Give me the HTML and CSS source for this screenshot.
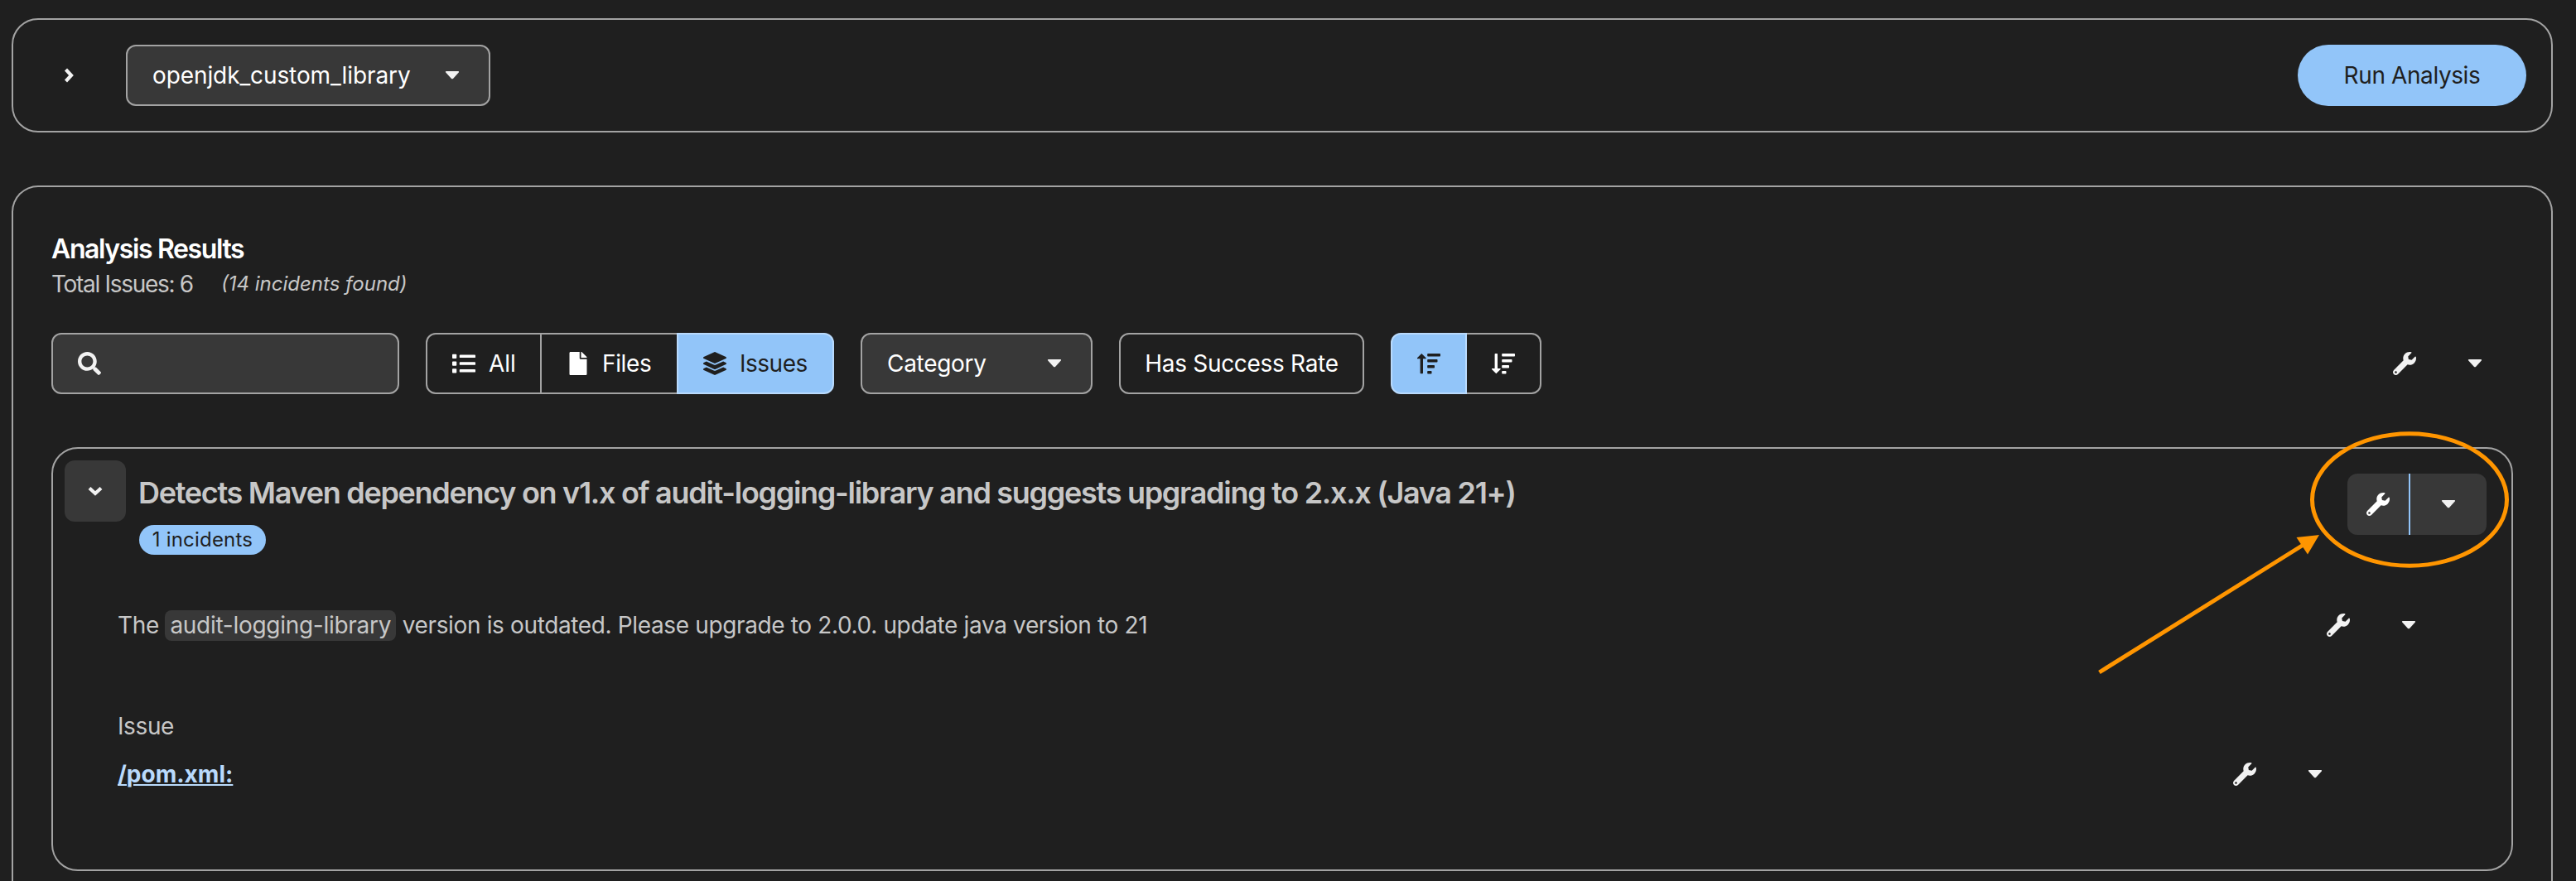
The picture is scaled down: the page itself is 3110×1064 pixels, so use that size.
FILE: index.html
```html
<!DOCTYPE html>
<html lang="en">
<head>
<meta charset="utf-8">
<title>Analysis Results</title>
<link rel="stylesheet" href="styles.css">
</head>
<body>
<svg class="defs" aria-hidden="true">
  <symbol id="wrench" viewBox="0 0 512 512"><path d="M507.73 109.1c-2.24-9.03-13.54-12.09-20.12-5.51l-74.36 74.36-67.88-11.31-11.31-67.88 74.36-74.36c6.62-6.62 3.43-17.9-5.66-20.16-47.38-11.74-99.55.91-136.58 37.93-39.64 39.64-50.55 97.1-34.05 147.2L18.74 402.76c-24.99 24.99-24.99 65.51 0 90.5 24.99 24.99 65.51 24.99 90.5 0l213.21-213.21c50.12 16.71 107.47 5.68 147.37-34.22 37.07-37.07 49.7-89.32 37.91-136.73zM64 472c-13.25 0-24-10.75-24-24 0-13.26 10.75-24 24-24s24 10.74 24 24c0 13.25-10.75 24-24 24z"/></symbol>
  <symbol id="caret" viewBox="0 0 18 12"><path d="M1.8 1h14.4c.9 0 1.2.9.6 1.5L10 9.9c-.6.6-1.4.6-2 0L1.200 2.500C.6 1.900.9 1 1.800 1z"/></symbol>
  <symbol id="angle" viewBox="0 0 14 20"><path d="M3.500 3l6.500 7-6.500 7" fill="none" stroke="currentColor" stroke-width="4.200"/></symbol>
</svg>

<main class="page">
  <section class="card profile">
    <button class="plain" aria-label="Expand"><svg class="angle"><use href="#angle"/></svg></button>
    <button class="select profile-select"><span class="t-profile">openjdk_custom_library</span><svg class="caret"><use href="#caret"/></svg></button>
    <button class="run">Run Analysis</button>
  </section>

  <section class="card results">
    <h2 class="title">Analysis Results</h2>
    <div class="meta"><span class="total">Total Issues: 6</span><em class="found">(14 incidents found)</em></div>

    <div class="toolbar">
      <div class="search">
        <svg class="icon" viewBox="0 0 512 512"><path d="M505 442.7L405.3 343c-4.5-4.5-10.6-7-17-7H372c27.6-35.3 44-79.7 44-128C416 93.1 322.900 0 208 0S0 93.100 0 208s93.100 208 208 208c48.300 0 92.700-16.400 128-44v16.300c0 6.400 2.500 12.500 7 17l99.700 99.700c9.400 9.400 24.600 9.400 33.900 0l28.300-28.300c9.400-9.400 9.400-24.600.1-34zM208 336c-70.700 0-128-57.200-128-128 0-70.700 57.200-128 128-128 70.700 0 128 57.200 128 128 0 70.700-57.200 128-128 128z"/></svg>
      </div>
      <div class="group view-group">
        <button class="seg seg-all"><svg class="icon" viewBox="0 0 512 512"><path d="M80 368H16a16 16 0 0 0-16 16v64a16 16 0 0 0 16 16h64a16 16 0 0 0 16-16v-64a16 16 0 0 0-16-16zm0-320H16A16 16 0 0 0 0 64v64a16 16 0 0 0 16 16h64a16 16 0 0 0 16-16V64a16 16 0 0 0-16-16zm0 160H16a16 16 0 0 0-16 16v64a16 16 0 0 0 16 16h64a16 16 0 0 0 16-16v-64a16 16 0 0 0-16-16zm416 176H176a16 16 0 0 0-16 16v32a16 16 0 0 0 16 16h320a16 16 0 0 0 16-16v-32a16 16 0 0 0-16-16zm0-320H176a16 16 0 0 0-16 16v32a16 16 0 0 0 16 16h320a16 16 0 0 0 16-16V80a16 16 0 0 0-16-16zm0 160H176a16 16 0 0 0-16 16v32a16 16 0 0 0 16 16h320a16 16 0 0 0 16-16v-32a16 16 0 0 0-16-16z"/></svg><span>All</span></button>
        <button class="seg seg-files"><svg class="icon" viewBox="0 0 384 512"><path d="M224 136V0H24C10.700 0 0 10.700 0 24v464c0 13.300 10.700 24 24 24h336c13.300 0 24-10.700 24-24V160H248c-13.200 0-24-10.800-24-24zm160-14.100v6.100H256V0h6.100c6.400 0 12.500 2.500 17 7l97.900 98c4.500 4.500 7 10.600 7 16.900z"/></svg><span>Files</span></button>
        <button class="seg seg-issues selected"><svg class="icon" viewBox="0 0 512 512"><path d="M12.410 148.020l232.940 105.670c6.800 3.090 14.490 3.090 21.290 0l232.940-105.670c16.550-7.510 16.550-32.520 0-40.030L266.650 2.310a25.607 25.607 0 0 0-21.290 0L12.410 107.980c-16.550 7.510-16.550 32.530 0 40.040zm487.180 88.280l-58.090-26.330-161.640 73.270c-7.560 3.430-15.590 5.170-23.860 5.170s-16.290-1.740-23.860-5.170L70.510 209.970l-58.100 26.330c-16.550 7.500-16.550 32.500 0 40l232.940 105.590c6.800 3.080 14.490 3.080 21.290 0L499.590 276.300c16.550-7.500 16.550-32.500 0-40zm0 127.800l-57.870-26.230-161.860 73.370c-7.560 3.430-15.590 5.170-23.860 5.170s-16.290-1.740-23.860-5.170L70.290 337.870 12.410 364.100c-16.550 7.500-16.550 32.500 0 40l232.940 105.590c6.800 3.080 14.490 3.080 21.290 0L499.590 404.100c16.550-7.500 16.550-32.500 0-40z"/></svg><span>Issues</span></button>
      </div>
      <button class="select category"><span class="t-category">Category</span><svg class="caret"><use href="#caret"/></svg></button>
      <button class="outline">Has Success Rate</button>
      <div class="group">
        <button class="seg sort-up selected" aria-label="Sort ascending"><svg class="icon" viewBox="0 0 28 28"><path d="M5.300 2L10.600 7.300c.4.500.2 1-.4 1H7V25.500q0 .8-.8.8H4.400q-.8 0-.8-.8V8.300H.4c-.6 0-.8-.5-.4-1z"/><path d="M13 2h14.200q.8 0 .8.800v1.900q0 .8-.8.800H13q-.8 0-.8-.8V2.800q0-.8.8-.8zM13 9h10.700q.8 0 .8.800v1.900q0 .8-.8.800H13q-.8 0-.8-.8V9.800q0-.8.8-.8zM13 16h7.200q.8 0 .8.800v1.900q0 .8-.8.800H13q-.8 0-.8-.8v-1.900q0-.8.8-.8zM13 23h3.700q.8 0 .8.800v1.900q0 .8-.8.800H13q-.8 0-.8-.8v-1.900q0-.8.800-.8z"/></svg></button>
        <button class="seg sort-down" aria-label="Sort descending"><svg class="icon" viewBox="0 0 28 28"><path d="M5.300 26.300L10.600 21c.4-.5.2-1-.4-1H7V2.800Q7 2 6.200 2H4.400q-.8 0-.8.800V20H.4c-.6 0-.8.500-.4 1z"/><path d="M13 2h14.200q.8 0 .8.800v1.900q0 .8-.8.800H13q-.8 0-.8-.8V2.800q0-.8.8-.8zM13 9h10.700q.8 0 .8.800v1.900q0 .8-.8.800H13q-.8 0-.8-.8V9.800q0-.8.8-.8zM13 16h7.200q.8 0 .8.800v1.900q0 .8-.8.800H13q-.8 0-.8-.8v-1.900q0-.8.8-.8zM13 23h3.700q.8 0 .8.800v1.900q0 .8-.8.800H13q-.8 0-.8-.8v-1.900q0-.8.800-.8z"/></svg></button>
      </div>
      <div class="split toolbar-split"><button class="split-main" aria-label="Fix"><svg class="icon"><use href="#wrench"/></svg></button><button class="split-more" aria-label="More"><svg class="caret"><use href="#caret"/></svg></button></div>
    </div>

    <article class="issue">
      <header class="issue-head">
        <button class="collapse" aria-label="Collapse"><svg class="angle down"><use href="#angle"/></svg></button>
        <div class="issue-title">
          <h3 class="name">Detects Maven dependency on v1.x of audit-logging-library and suggests upgrading to 2.x.x (Java 21+)</h3>
          <span class="badge">1 incidents</span>
        </div>
        <div class="split active"><button class="split-main" aria-label="Fix"><svg class="icon"><use href="#wrench"/></svg></button><button class="split-more" aria-label="More"><svg class="caret"><use href="#caret"/></svg></button></div>
      </header>
      <div class="issue-body">
        <div class="row">
          <p class="message">The <code class="code">audit-logging-library</code> version is outdated. Please upgrade to 2.0.0. update java version to 21</p>
          <div class="split"><button class="split-main" aria-label="Fix"><svg class="icon"><use href="#wrench"/></svg></button><button class="split-more" aria-label="More"><svg class="caret"><use href="#caret"/></svg></button></div>
        </div>
        <div class="label">Issue</div>
        <div class="row file-row">
          <a class="link" href="#">/pom.xml:</a>
          <div class="split"><button class="split-main" aria-label="Fix"><svg class="icon"><use href="#wrench"/></svg></button><button class="split-more" aria-label="More"><svg class="caret"><use href="#caret"/></svg></button></div>
        </div>
      </div>
    </article>
  </section>
</main>

<svg class="callout" viewBox="0 0 520 310" aria-hidden="true">
  <ellipse cx="389" cy="93.500" rx="117.500" ry="79.700"/>
  <path class="line" d="M14.500 302L264 146"/>
  <path class="head" d="M280 136l-27.500 3L266 159.500z"/>
</svg>
</body>
</html>
```
FILE: styles.css
```css
* { box-sizing: border-box; }
body {
  margin: 0;
  height: 1064px;
  position: relative;
  overflow: hidden;
  background: #1f1f1f;
  color: #c7c7c7;
  font: 400 28px/42px Inter, "Open Sans", sans-serif;
}
button {
  margin: 0;
  padding: 0;
  border: 0;
  background: none;
  color: #fff;
  font: inherit;
  display: flex;
  align-items: center;
  white-space: nowrap;
}
h2, h3, p { margin: 0; }
svg { display: block; flex: none; fill: currentColor; }
.defs { display: none; }
.icon { width: 28px; height: 28px; }
.caret { width: 18px; height: 12px; color: #f2f2f2; }
.angle { width: 14px; height: 20px; color: #f2f2f2; }
.down { transform: rotate(90deg); }

.page {
  display: flex;
  flex-direction: column;
  gap: 64px;
  height: 1064px;
  padding: 22px 28px 0 14px;
}
.card { border: 2px solid #a3a3a3; border-radius: 32px; flex: none; }

.profile { display: flex; align-items: center; padding: 30px; height: 138px; }
.plain { width: 74px; height: 74px; justify-content: center; margin-right: 32px; }
.select {
  height: 74px;
  padding: 0 35px 0 30px;
  justify-content: space-between;
  border: 2px solid #a3a3a3;
  border-radius: 12px;
  background: #383838;
}
.profile-select { width: 440px; }
.t-profile { letter-spacing: -0.1px; }
.run {
  width: 276px;
  height: 74px;
  justify-content: center;
  margin-left: auto;
  border-radius: 37px;
  background: #92c5f9;
  color: #1f1f1f;
  letter-spacing: -0.4px;
}

.results {
  height: 840px;
  padding: 54px 46px 0;
  border-bottom: 0;
  border-radius: 32px 32px 0 0;
}
.title { color: #fff; font-size: 32px; font-weight: 600; line-height: 42px; letter-spacing: -1.38px; }
.meta { display: flex; gap: 34px; }
.total { letter-spacing: -1.3px; }
.found { font-size: 24px; }

.toolbar { display: flex; gap: 32px; margin-top: 38px; height: 74px; }
.search {
  display: flex;
  align-items: center;
  width: 420px;
  padding: 0 30px;
  border: 2px solid #a3a3a3;
  border-radius: 12px;
  background: #383838;
  color: #f2f2f2;
}
.group { display: flex; }
.seg { height: 74px; gap: 16px; padding-left: 30px; border: 2px solid #a3a3a3; }
.seg:first-child { border-radius: 12px 0 0 12px; }
.seg:last-child { border-radius: 0 12px 12px 0; }
.seg-all { width: 140px; }
.seg-files { width: 163px; border-left: 0; border-right: 0; padding-left: 30px; gap: 15px; letter-spacing: -0.35px; }
.seg-issues { width: 190px; letter-spacing: -0.5px; }
.sort-up { width: 92px; }
.sort-down { width: 90px; border-left: 0; }
.seg.selected { background: #92c5f9; border-color: #b9dafc; color: #1f1f1f; }
.category { width: 280px; }
.t-category { letter-spacing: -0.3px; }
.outline {
  width: 296px;
  justify-content: center;
  border: 2px solid #a3a3a3;
  border-radius: 12px;
  letter-spacing: -0.3px;
}

.split { display: flex; flex: none; width: 168px; height: 74px; border-radius: 12px; color: #f2f2f2; }
.split button { justify-content: center; color: inherit; }
.split .split-main { width: 74px; }
.split .split-more { flex: 1; border-left: 2px solid transparent; }
.toolbar-split { margin-left: auto; }
.active { margin-top: 16px; background: #383838; color: #fff; }
.active .split-more { border-color: #92c5f9; }

.issue { height: 512px; margin-top: 64px; border: 2px solid #a3a3a3; border-radius: 32px; }
.issue-head { display: flex; align-items: flex-start; padding: 14px 30px 0 14px; height: 128px; }
.collapse { width: 74px; height: 74px; justify-content: center; border-radius: 12px; background: #383838; }
.issue-title { flex: 1; padding: 15px 0 0 15px; }
.name { font-size: 36px; font-weight: 600; line-height: 48px; letter-spacing: -1.29px; }
.badge {
  display: block;
  width: 153px;
  margin: 15px 0 0 1px;
  border-radius: 18px;
  background: #92c5f9;
  color: #1f1f1f;
  font-size: 24px;
  line-height: 36px;
  letter-spacing: 0.2px;
  text-align: center;
}
.issue-body { padding: 48px 78px 0; }
.row { display: flex; align-items: center; justify-content: space-between; height: 74px; }
.message { letter-spacing: -0.36px; }
.code {
  display: inline-block;
  padding: 0 6px;
  border-radius: 8px;
  background: #383838;
  font: inherit;
  line-height: 37px;
  letter-spacing: -0.28px;
}
.label { margin-top: 64px; letter-spacing: -0.4px; }
.file-row { padding-right: 113px; }
.link { color: #b9dafc; font-weight: 700; text-decoration: underline 2px; text-underline-offset: 2px; letter-spacing: 0; }

.callout { position: absolute; left: 2520px; top: 510px; width: 520px; height: 310px; }
.callout ellipse, .line { fill: none; stroke: #ff9500; stroke-width: 5px; }
.head { fill: #ff9500; }
```
